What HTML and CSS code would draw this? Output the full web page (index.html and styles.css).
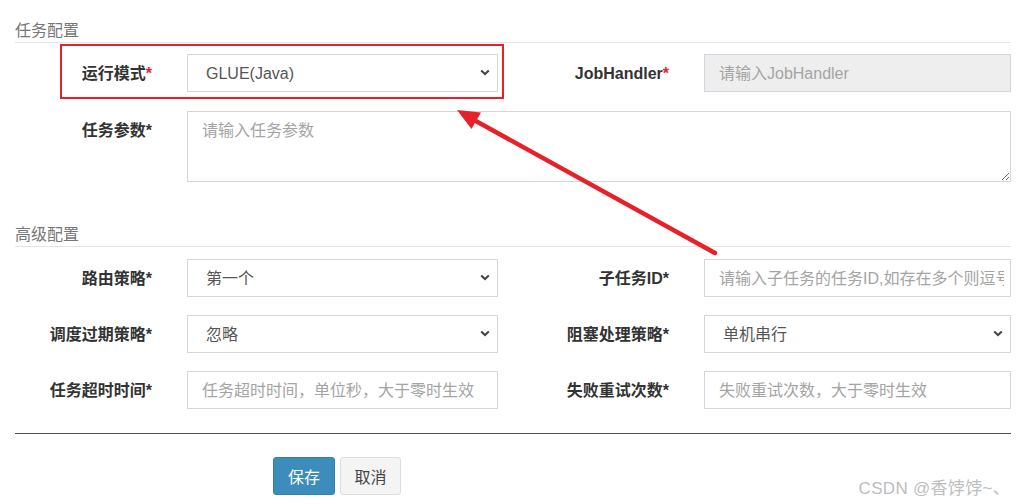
FILE: index.html
```html
<!DOCTYPE html>
<html lang="zh-CN">
<head>
<meta charset="utf-8">
<title>任务配置</title>
<link rel="stylesheet" href="styles.css">
</head>
<body>
<div class="page">
  <div class="section-title">任务配置</div>
  <div class="form-grid first">
    <label class="lbl">运行模式<span class="req">*</span></label>
    <div class="select-wrap">
      <select class="ctl sel"><option>GLUE(Java)</option></select>
      <svg class="chev" width="10" height="7" viewBox="0 0 10 7"><path d="M1.2 1.4 L5 5 L8.8 1.4" fill="none" stroke="#444" stroke-width="2"/></svg>
    </div>
    <label class="lbl">JobHandler<span class="req">*</span></label>
    <input class="ctl inp ro" readonly placeholder="请输入JobHandler">
    <label class="lbl">任务参数<span class="star">*</span></label>
    <textarea class="ctl area" placeholder="请输入任务参数"></textarea>
  </div>

  <div class="section-title second">高级配置</div>
  <div class="form-grid">
    <label class="lbl">路由策略<span class="star">*</span></label>
    <div class="select-wrap">
      <select class="ctl sel"><option>第一个</option></select>
      <svg class="chev" width="10" height="7" viewBox="0 0 10 7"><path d="M1.2 1.4 L5 5 L8.8 1.4" fill="none" stroke="#444" stroke-width="2"/></svg>
    </div>
    <label class="lbl">子任务ID<span class="star">*</span></label>
    <input class="ctl inp" placeholder="请输入子任务的任务ID,如存在多个则逗号分隔">

    <label class="lbl">调度过期策略<span class="star">*</span></label>
    <div class="select-wrap">
      <select class="ctl sel"><option>忽略</option></select>
      <svg class="chev" width="10" height="7" viewBox="0 0 10 7"><path d="M1.2 1.4 L5 5 L8.8 1.4" fill="none" stroke="#444" stroke-width="2"/></svg>
    </div>
    <label class="lbl">阻塞处理策略<span class="star">*</span></label>
    <div class="select-wrap">
      <select class="ctl sel"><option>单机串行</option></select>
      <svg class="chev" width="10" height="7" viewBox="0 0 10 7"><path d="M1.2 1.4 L5 5 L8.8 1.4" fill="none" stroke="#444" stroke-width="2"/></svg>
    </div>

    <label class="lbl">任务超时时间<span class="star">*</span></label>
    <input class="ctl inp" placeholder="任务超时时间，单位秒，大于零时生效">
    <label class="lbl">失败重试次数<span class="star">*</span></label>
    <input class="ctl inp" placeholder="失败重试次数，大于零时生效">
  </div>

  <hr class="divider">

  <div class="actions">
    <button class="btn btn-primary">保存</button>
    <button class="btn btn-default">取消</button>
  </div>
</div>

<div class="watermark">CSDN @香饽饽~、</div>

<svg class="annot" width="1027" height="504" viewBox="0 0 1027 504">
  <rect x="61" y="45" width="442" height="53" fill="none" stroke="#e8202a" stroke-width="2"/>
  <line x1="715" y1="253" x2="474" y2="120" stroke="#e8202a" stroke-width="4.5" stroke-linecap="round"/>
  <polygon points="457,110 481,112.5 471.5,129" fill="#e8202a"/>
</svg>
</body>
</html>
```

FILE: styles.css
```css
html, body {
  margin: 0;
  padding: 0;
  background: #fff;
  overflow: hidden;
}

body {
  position: relative;
  width: 1027px;
  height: 504px;
  font-family: "Liberation Sans", "Noto Sans CJK SC", sans-serif;
  font-size: 16px;
  color: #333;
}

.page {
  padding-left: 15px;
  width: 996px;
}

.section-title {
  margin-top: 20px;
  line-height: 22px;
  color: #777;
  border-bottom: 1px solid #e5e5e5;
}

.section-title.second {
  margin-top: 42px;
}

.form-grid {
  display: grid;
  grid-template-columns: 172px 311px 206px 307px;
  row-gap: 18px;
  margin-top: 12px;
}

.form-grid.first {
  margin-top: 11px;
  row-gap: 19px;
}

.lbl {
  text-align: right;
  padding-right: 35px;
  font-weight: bold;
  line-height: 39px;
  height: 38px;
  color: #333;
  white-space: nowrap;
}

.req {
  color: #e8202a;
}

.star {
  color: #333;
}

.ctl {
  box-sizing: border-box;
  height: 38px;
  width: 100%;
  margin: 0;
  border: 1px solid #d2d6de;
  border-radius: 0;
  background: #fff;
  font-family: "Liberation Sans", "Noto Sans CJK SC", sans-serif;
  font-size: 16px;
  color: #555;
  outline: none;
}

.inp {
  padding: 1px 6px 0 14px;
}

.inp::placeholder,
.area::placeholder {
  color: #a4a4a4;
}

.ro {
  background: #eee;
}

.select-wrap {
  position: relative;
}

.sel {
  appearance: none;
  -webkit-appearance: none;
  padding: 1px 30px 0 18px;
}

.chev {
  position: absolute;
  right: 8px;
  top: 15px;
}

.area {
  grid-column: 2 / 5;
  height: 71px;
  padding: 8px 14px;
  line-height: 22px;
  resize: both;
}

.divider {
  margin: 24px 0 0 0;
  border: 0;
  height: 1px;
  background: #4d4d4d;
}

.actions {
  display: flex;
  gap: 5px;
  padding-left: 258px;
  margin-top: 23px;
}

.btn {
  box-sizing: border-box;
  height: 38px;
  border-radius: 3px;
  font-family: "Liberation Sans", "Noto Sans CJK SC", sans-serif;
  font-size: 16px;
  padding: 0;
  cursor: pointer;
}

.btn-primary {
  width: 62px;
  background: #3c8dbc;
  border: 1px solid #367fa9;
  color: #fff;
}

.btn-default {
  width: 61px;
  background: #f4f4f4;
  border: 1px solid #ddd;
  color: #444;
}

.watermark {
  position: absolute;
  right: 17px;
  top: 474px;
  font-size: 17px;
  color: #bdbdbd;
  letter-spacing: 0.3px;
}

.annot {
  position: absolute;
  left: 0;
  top: 0;
  pointer-events: none;
}
```
